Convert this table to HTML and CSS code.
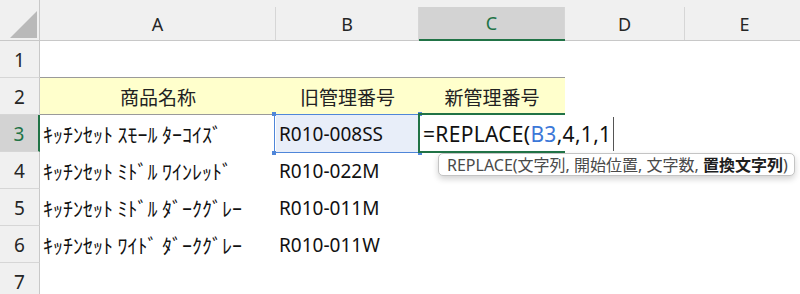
FILE: index.html
```html
<!DOCTYPE html>
<html lang="ja">
  <head>
    <meta charset="UTF-8" />
    <title>Book1 - REPLACE</title>
    <link rel="stylesheet" href="styles.css">
  </head>
  <body>
    <div class="sheet">
      <!-- column headers -->
      <div class="corner"><span class="corner-tri"></span></div>
      <div class="colhead"><span class="label">A</span></div>
      <div class="colhead"><span class="label">B</span></div>
      <div class="colhead active"><span class="label">C</span></div>
      <div class="colhead"><span class="label">D</span></div>
      <div class="colhead"><span class="label">E</span></div>

      <!-- row 1 -->
      <div class="rowhead">1</div>
      <div class="cell above-head"></div>
      <div class="cell above-head"></div>
      <div class="cell above-head"></div>
      <div class="cell"></div>
      <div class="cell"></div>

      <!-- row 2 : table header -->
      <div class="rowhead">2</div>
      <div class="cell head center">商品名称</div>
      <div class="cell head center">旧管理番号</div>
      <div class="cell head center">新管理番号</div>
      <div class="cell"></div>
      <div class="cell"></div>

      <!-- row 3 : editing C3 -->
      <div class="rowhead active">3</div>
      <div class="cell kana">ｷｯﾁﾝｾｯﾄ ｽﾓｰﾙ ﾀｰｺｲｽﾞ</div>
      <div class="cell ref">R010-008SS<i class="knob tl"></i><i class="knob tr"></i><i class="knob bl"></i><i class="knob br"></i></div>
      <div class="cell editing">
        <span class="formula">=REPLACE(<span class="ref-text">B3</span>,4,1,1</span><span class="caret"></span>
        <div class="hint">REPLACE(文字列, 開始位置, 文字数, <b>置換文字列</b>)</div>
      </div>
      <div class="cell"></div>
      <div class="cell"></div>

      <!-- row 4 -->
      <div class="rowhead">4</div>
      <div class="cell kana">ｷｯﾁﾝｾｯﾄ ﾐﾄﾞﾙ ﾜｲﾝﾚｯﾄﾞ</div>
      <div class="cell">R010-022M</div>
      <div class="cell"></div>
      <div class="cell"></div>
      <div class="cell"></div>

      <!-- row 5 -->
      <div class="rowhead">5</div>
      <div class="cell kana">ｷｯﾁﾝｾｯﾄ ﾐﾄﾞﾙ ﾀﾞｰｸｸﾞﾚｰ</div>
      <div class="cell">R010-011M</div>
      <div class="cell"></div>
      <div class="cell"></div>
      <div class="cell"></div>

      <!-- row 6 -->
      <div class="rowhead">6</div>
      <div class="cell kana">ｷｯﾁﾝｾｯﾄ ﾜｲﾄﾞ ﾀﾞｰｸｸﾞﾚｰ</div>
      <div class="cell">R010-011W</div>
      <div class="cell"></div>
      <div class="cell"></div>
      <div class="cell"></div>

      <!-- row 7 -->
      <div class="rowhead">7</div>
      <div class="cell"></div>
      <div class="cell"></div>
      <div class="cell"></div>
      <div class="cell"></div>
      <div class="cell"></div>
    </div>
  </body>
</html>
```

FILE: styles.css
```css
/* Sheet basics */
body { margin: 0; overflow: hidden; background: #fff; font-family: "Noto Sans", "Noto Sans CJK JP", sans-serif; color: #111; }
.sheet { display: grid; grid-template-columns: 40px 236px 143px 146px 120px 120px; grid-template-rows: 41px repeat(7, 37px); width: 805px; }

/* Column headers */
.corner { background: #f0f0f0; border-right: 1px solid #c8c8c8; border-bottom: 1px solid #c8c8c8; position: relative; }
.corner-tri { position: absolute; right: 2px; bottom: 2px; width: 0; height: 0; border-left: 27px solid transparent; border-bottom: 27px solid #b9b9b9; }
.colhead { background: #f0f0f0; padding-top: 7px; border-bottom: 1px solid #c8c8c8; display: flex; }
.colhead .label { flex: 1; display: flex; align-items: center; justify-content: center; border-right: 1px solid #d6d6d6; font-size: 18px; color: #262626; }
.colhead.active { border-bottom: 2px solid #217346; }
.colhead.active .label { background: #d3d3d3; color: #217346; }

/* Row headers */
.rowhead { background: #f0f0f0; border-right: 1px solid #c8c8c8; border-bottom: 1px solid #d6d6d6; display: flex; align-items: center; justify-content: center; font-size: 19px; color: #262626; padding-top: 1px; box-sizing: border-box; }
.rowhead.active { background: #d3d3d3; color: #217346; border-right: 2px solid #217346; }

/* Cells (gridlines hidden) */
.cell { display: flex; align-items: center; padding: 1px 3px 0; font-size: 19px; white-space: nowrap; box-sizing: border-box; position: relative; min-width: 0; }
.cell.center { justify-content: center; }
.cell.above-head { border-bottom: 1px solid #9a9a9a; }
.cell.head { background: #ffffcc; border-bottom: 1px solid #9a9a9a; font-family: "Noto Sans CJK JP", sans-serif; color: #222; }
.cell.kana { font-family: "Noto Sans CJK JP", sans-serif; font-size: 20px; }

/* Range reference highlight on B3 */
.cell.ref { background: #e8eef9; }
.cell.ref::after { content: ""; position: absolute; top: -1px; left: -2px; right: -1px; bottom: -1px; border: 1px solid #4f86d9; pointer-events: none; }
.knob { position: absolute; width: 4px; height: 4px; background: #4f86d9; z-index: 2; }
.knob.tl { top: -3px; left: -4px; }
.knob.tr { top: -3px; right: -3px; }
.knob.bl { bottom: -3px; left: -4px; }
.knob.br { bottom: -3px; right: -3px; }

/* Active cell in edit mode: text runs past the right edge */
.cell.editing { z-index: 3; overflow: visible; padding-left: 4px; }
.cell.editing::after { content: ""; position: absolute; top: -2px; left: -1px; right: 0; bottom: -1px; border: 2px solid #217346; border-right: none; pointer-events: none; }
.formula { font-size: 21px; color: #111; letter-spacing: 0.3px; flex-shrink: 0; }
.ref-text { color: #3c78d8; }
.caret { display: inline-block; flex-shrink: 0; width: 1px; height: 34px; background: #555; margin-left: 2px; }

/* Function argument tooltip */
.hint { position: absolute; top: 38px; left: 19px; width: 357px; height: 23px; box-sizing: border-box; padding: 0 0 0 8px; background: #fff; border: 1px solid #c4c4c4; border-radius: 5px; box-shadow: 0 3px 6px rgba(0, 0, 0, 0.18); font-size: 16px; line-height: 21px; color: #4a4a4a; font-family: "Noto Sans", "Noto Sans CJK JP", sans-serif; white-space: nowrap; }
.hint b { color: #1e1e1e; font-family: "Noto Sans CJK JP", sans-serif; }
```
